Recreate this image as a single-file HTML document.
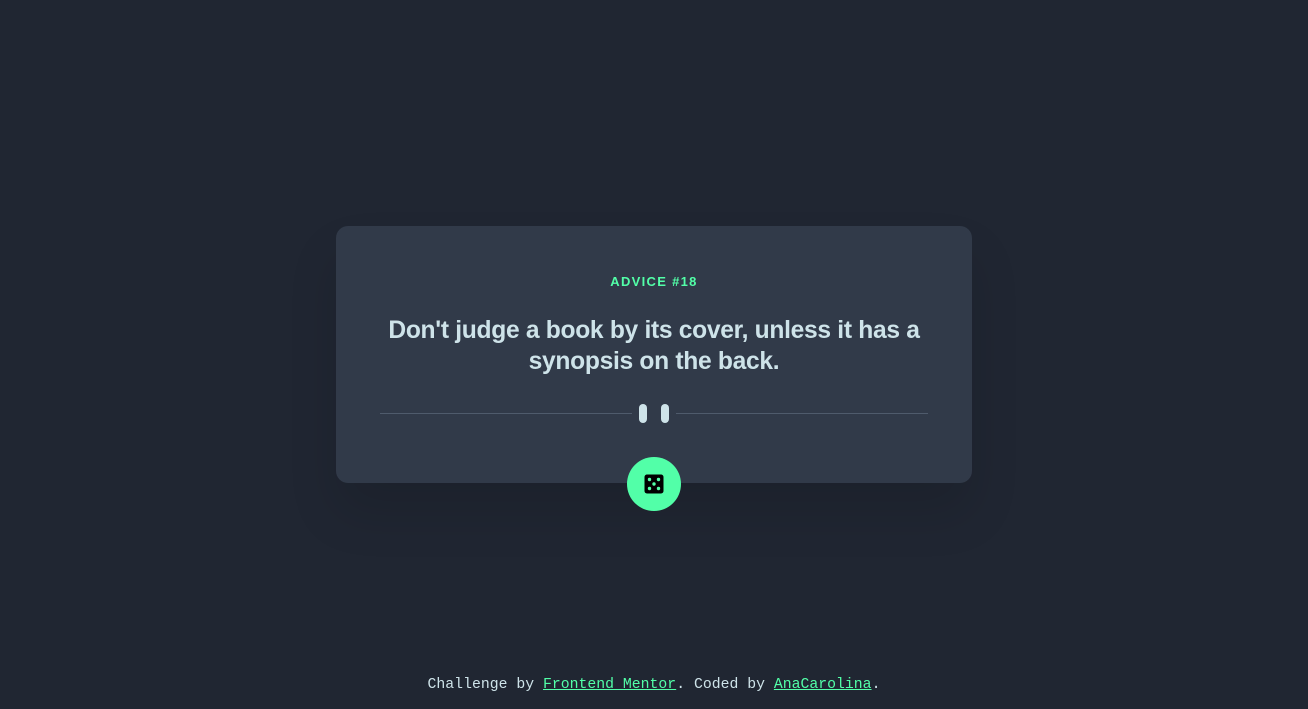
<!DOCTYPE html>
<html><head><style>
body{margin:0;width:1308px;height:709px;background:#202632;font-family:"Liberation Sans",sans-serif;position:relative;overflow:hidden}
.card{position:absolute;left:336px;top:226px;width:636px;height:257px;background:#313a49;border-radius:12px;box-shadow:0 30px 50px rgba(0,0,0,.12)}
.h{position:absolute;top:274px;left:0;width:1308px;text-align:center;color:#52ffa8;font-size:13px;font-weight:bold;letter-spacing:1.3px}
.q{position:absolute;top:315px;left:336px;width:636px;text-align:center;color:#cee3e9;font-size:24.6px;font-weight:bold;line-height:31px;letter-spacing:-0.3px}
.line{position:absolute;top:413px;height:1px;background:#4f5b6c}
.bar{position:absolute;top:404px;width:8px;height:19px;border-radius:4px;background:#cee3e9}
.btn{position:absolute;left:627px;top:457px;width:54px;height:54px;border-radius:50%;background:#52ffa8}
.f{position:absolute;top:677px;left:0;width:1308px;text-align:center;font-family:"Liberation Mono",monospace;font-size:14.8px;color:#cee3e9}
.f a{color:#52ffa8;text-decoration:underline}
</style></head><body>
<div class="card"></div>
<div class="h">ADVICE #18</div>
<div class="q">Don't judge a book by its cover, unless it has a<br>synopsis on the back.</div>
<div class="line" style="left:380px;width:252px"></div>
<div class="line" style="left:676px;width:252px"></div>
<div class="bar" style="left:639px"></div>
<div class="bar" style="left:661px"></div>
<div class="btn"><svg width="54" height="54" viewBox="0 0 54 54"><rect x="17.5" y="17.5" width="19" height="19" rx="2.5" fill="#000"/><g fill="#52ffa8"><circle cx="22.5" cy="22.5" r="1.7"/><circle cx="31.5" cy="22.5" r="1.7"/><circle cx="27" cy="27" r="1.7"/><circle cx="22.5" cy="31.5" r="1.7"/><circle cx="31.5" cy="31.5" r="1.7"/></g></svg></div>
<div class="f">Challenge by <a>Frontend Mentor</a>. Coded by <a>AnaCarolina</a>.</div>
</body></html>
